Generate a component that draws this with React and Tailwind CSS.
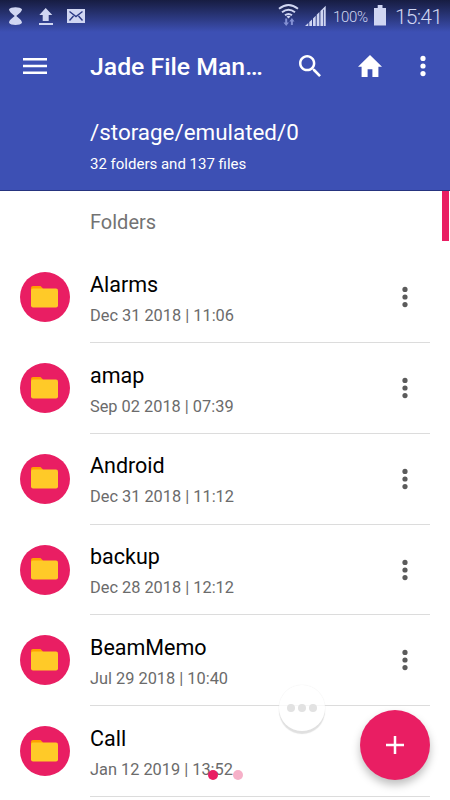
import React from "react";

const folders = [
  { name: "Alarms", date: "Dec 31 2018 | 11:06" },
  { name: "amap", date: "Sep 02 2018 | 07:39" },
  { name: "Android", date: "Dec 31 2018 | 11:12" },
  { name: "backup", date: "Dec 28 2018 | 12:12" },
  { name: "BeamMemo", date: "Jul 29 2018 | 10:40" },
  { name: "Call", date: "Jan 12 2019 | 13:52" },
];

const StatusBar = () => (
  <div className="flex h-8 items-center bg-gradient-to-b from-[#171d42] to-[#3d50b4] text-[#d0d6f2]">
    <svg className="ml-[8px] h-8 w-[80px]" viewBox="8 0 80 32" fill="currentColor">
      <path d="M9 9.3C10.5 6.5 20.5 6.5 22 9.3C21.5 12.5 18.5 14 16.3 16C18.5 18 21.5 19.5 22 22.7C20.5 25.7 10.5 25.7 9 22.7C9.500 19.5 12.500 18 14.700 16C12.500 14 9.500 12.500 9 9.300Z" />
      <path d="M45.700 8L52.300 15H48.700V21H42.700V15H39.300ZM39 23H53V25H39Z" />
      <path d="M67 9H85V23H67Z" />
      <path d="M69.500 11.500L76 16.500L82.500 11.500M69.500 20.500L73.500 16M82.500 20.500L78.500 16" fill="none" stroke="#2b3985" strokeWidth="1.400" />
    </svg>
    <div className="flex-1" />
    <svg className="h-8 w-[50px]" viewBox="278 0 50 32" fill="none">
      <g stroke="currentColor" strokeWidth="1.900">
        <path d="M280 8.800Q289.500 1.200 299 8.800" />
        <path d="M283 12.200Q289.500 7.200 296 12.200" />
        <path d="M286 15.300Q289.500 12.600 293 15.300" />
      </g>
      <path d="M287.500 16.500Q289.500 15 291.500 16.500L289.500 18.500Z" fill="currentColor" />
      <path d="M286.200 18.500H288.200V22.500H290L287.200 26L284.500 22.500H286.200ZM291.900 25H293.900V21.500H295.500L292.900 18L290.300 21.500H291.900Z" fill="#8390d3" />
      <path d="M306 26L309.300 23V26ZM310.300 22L313 19.500V26H310.300ZM314 18.500L316.700 15.800V26H314ZM317.700 14.700L320.400 12V26H317.700ZM321.400 11L326.700 5.700V26H324.800V10L324.100 9.500V26H321.400Z" fill="currentColor" />
    </svg>
    <span className="ml-[6px] mt-[2px] w-[40px] text-[15px] leading-8 font-light tracking-[-0.3px]">100%</span>
    <svg className="h-8 w-[14px]" viewBox="373 0 14 32" fill="currentColor">
      <path d="M377.700 5H382.500V8H386V25.500H374V8H377.700Z" />
    </svg>
    <span className="ml-[8px] mt-[2px] w-[55px] text-[21px] leading-8 font-light tracking-[-0.8px]">15:41</span>
  </div>
);

const MoreDots = ({ className }) => (
  <svg className={className} viewBox="0 0 6 22" fill="currentColor">
    <circle cx="3" cy="3.400" r="2.600" />
    <circle cx="3" cy="11" r="2.600" />
    <circle cx="3" cy="18.600" r="2.600" />
  </svg>
);

const Toolbar = () => (
  <div className="flex h-[69px] items-center pl-[23px]">
    <svg className="mt-[-1px] h-[18px] w-6" viewBox="0 0 24 18" fill="currentColor">
      <path d="M0 1H24V3.500H0ZM0 7.700H24V10.200H0ZM0 14.400H24V16.900H0Z" />
    </svg>
    <h1 className="ml-[43px] mt-[1px] w-[176px] text-[24.8px] leading-[34px] font-medium whitespace-nowrap">
      Jade File Man…
    </h1>
    <svg className="ml-[33px] mt-[-2px] h-[22px] w-[22px]" viewBox="3 3 17.490 17.490" fill="currentColor">
      <path d="M15.500 14h-.79l-.28-.27C15.410 12.590 16 11.110 16 9.500 16 5.910 13.090 3 9.500 3S3 5.910 3 9.500 5.910 16 9.500 16c1.610 0 3.090-.59 4.230-1.570l.27.28v.79l5 4.990L20.490 19l-4.990-5zm-6 0C7.010 14 5 11.990 5 9.500S7.010 5 9.500 5 14 7.010 14 9.500 11.990 14 9.500 14z" />
    </svg>
    <svg className="ml-[37px] mt-[-2px] h-[22px] w-6" viewBox="2 3 20 17" fill="currentColor" preserveAspectRatio="none">
      <path d="M10 20v-6h4v6h5v-8h3L12 3 2 12h3v8z" />
    </svg>
    <MoreDots className="ml-[37.500px] mt-[-2px] h-[22px] w-1.5" />
  </div>
);

const FolderRow = ({ name, date }) => (
  <div className="flex h-[90.75px] shrink-0 pl-5">
    <div className="mt-[20px] flex h-[50px] w-[50px] items-center justify-center rounded-full bg-[#e91e63]">
      <svg className="mr-px mb-px h-[22px] w-[27px]" viewBox="0 0 27 22">
        <path d="M2 0H9.500L12 2.500V7H0V2Q0 0 2 0Z" fill="#ffa000" />
        <path d="M2 2.500H25Q27 2.500 27 4.500V19.500Q27 21.500 25 21.500H2Q0 21.500 0 19.500V4.500Q0 2.500 2 2.500Z" fill="#ffca28" />
      </svg>
    </div>
    <div className="mr-5 ml-5 flex flex-1 border-b border-[#dcdcdc]">
      <div className="flex-1 pt-[18.500px]">
        <div className="text-[21.5px] leading-[28px] text-black">{name}</div>
        <div className="mt-[6px] text-[16.35px] leading-[22px] text-[#6b6b6b]">{date}</div>
      </div>
      <MoreDots className="mt-[34px] mr-[22px] h-[22px] w-1.5 text-[#5b5b5b]" />
    </div>
  </div>
);

export default function App() {
  return (
    <div className="relative flex h-[800px] w-[450px] flex-col overflow-hidden bg-white font-[Roboto,sans-serif]">
      <header className="h-[191px] shrink-0 border-b border-[#26347f] bg-[#3d50b4] text-white">
        <StatusBar />
        <Toolbar />
        <div className="pl-[90px]">
          <div className="mt-[16px] text-[22.4px] leading-[30px]">/storage/emulated/0</div>
          <div className="mt-[7px] text-[15px] leading-5">32 folders and 137 files</div>
        </div>
      </header>
      <main className="flex flex-1 flex-col overflow-hidden">
        <h2 className="h-[61.250px] shrink-0 pl-[90px] text-[20px] leading-[63px] text-[#737373]">Folders</h2>
        {folders.map((folder) => (
          <FolderRow key={folder.name} {...folder} />
        ))}
      </main>

      {/* scroll thumb */}
      <div className="absolute top-[191px] left-[442px] h-[50px] w-[7px] bg-[#e91e63]" />

      {/* floating assistant button */}
      <div className="absolute top-[685px] left-[279px] flex h-[46px] w-[46px] items-center justify-center gap-[3px] rounded-full bg-white/80 shadow-[0_3px_1px_#e0e0e0,0_0_1px_#ddd]">
        <span className="h-2 w-2 rounded-full bg-[#e2e2e2]" />
        <span className="h-2 w-2 rounded-full bg-[#e2e2e2]" />
        <span className="h-2 w-2 rounded-full bg-[#e2e2e2]" />
      </div>

      {/* page indicator */}
      <div className="absolute top-[770px] left-[207.500px] flex gap-[15px]">
        <span className="h-2.5 w-2.5 rounded-full bg-[#e91e63]" />
        <span className="h-2.5 w-2.5 rounded-full bg-[#f6b0c8]" />
      </div>

      <button className="absolute top-[710px] left-[360px] flex h-[70px] w-[70px] items-center justify-center rounded-full bg-[#e91e63] shadow-[0_5px_8px_rgba(0,0,0,0.25)]">
        <svg className="h-[18px] w-[18px]" viewBox="0 0 18 18" fill="none" stroke="#fff" strokeWidth="2.500">
          <path d="M9 0V18M0 9H18" />
        </svg>
      </button>
    </div>
  );
}
